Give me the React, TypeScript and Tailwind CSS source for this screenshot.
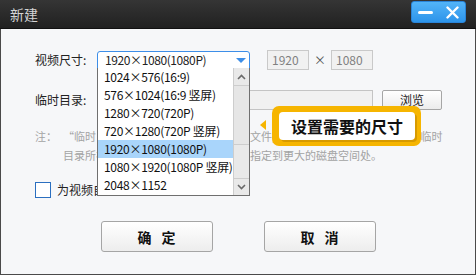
import React from "react";

const items = [
  "1024×576(16:9)",
  "576×1024(16:9 竖屏)",
  "1280×720(720P)",
  "720×1280(720P 竖屏)",
  "1920×1080(1080P)",
  "1080×1920(1080P 竖屏)",
  "2048×1152",
];

export default function App() {
  return (
    <div className="relative w-[476px] h-[275px] flex flex-col overflow-hidden bg-[#f6f7f9] font-['Noto_Sans_CJK_SC','Microsoft_YaHei',sans-serif]">
      {/* title bar */}
      <div className="h-[29px] flex items-start justify-between bg-linear-to-b from-[#353535] to-[#212121] border-b border-[#111]">
        <div className="self-center pl-[10px] text-[14px] text-[#d4d4d4] leading-none">新建</div>
        <div className="mt-[1px] mr-[10px] w-[55px] h-[22px] rounded-[3px] bg-linear-to-b from-[#52b4f8] to-[#2c94ea] border border-[#2a84d8] flex items-center">
          <div className="ml-[6px] w-[15px] h-[3px] rounded-full bg-white" />
          <svg className="ml-[13px]" width="13" height="13" viewBox="0 0 13 13">
            <path d="M1.5 1.5 L11.5 11.5 M11.5 1.5 L1.5 11.5" stroke="white" strokeWidth="2.4" strokeLinecap="round" />
          </svg>
        </div>
      </div>

      {/* body */}
      <div className="flex-1 flex flex-col border-x border-b border-[#4a4a4a] pt-[21px] text-[12px] text-[#222]">
        {/* row 1 */}
        <div className="flex items-center h-[20px] pl-[34px]">
          <div className="w-[62px] leading-none">视频尺寸:</div>
          <div className="relative w-[153px] h-[18px] border border-[#3d8ee8] rounded-t-[3px] bg-white flex items-center pl-[7px] text-[12px] leading-none tracking-[-0.4px]">
            <span>1920×1080(1080P)</span>
            <svg className="absolute right-[3px] top-[6px]" width="10" height="5" viewBox="0 0 10 5">
              <path d="M0 0 L10 0 L5 5 Z" fill="#3d8ee8" />
            </svg>
            {/* dropdown list */}
            <div className="absolute left-[-1px] top-[16px] w-[153px] h-[128px] z-10 bg-white border border-[#6f6f6f] border-t-0 flex tracking-[-0.3px]">
              <div className="w-[135px] flex flex-col">
                {items.map((t, i) => (
                  <div
                    key={t}
                    className={
                      i === 4
                        ? "h-[18px] shrink-0 flex items-center pl-[6px] bg-[#a9d5fb] text-[#111] whitespace-nowrap"
                        : "h-[18px] shrink-0 flex items-center pl-[6px] text-[#111] whitespace-nowrap"
                    }
                  >
                    {t}
                  </div>
                ))}
              </div>
              <div className="w-[16px] flex flex-col bg-[#e9e9e9] border-l border-[#cdcdcd]">
                <div className="h-[18px] flex items-center justify-center border-b border-[#cdcdcd]">
                  <svg width="9" height="6" viewBox="0 0 9 6">
                    <path d="M1 5 L4.5 1.5 L8 5" stroke="#6a6a6a" strokeWidth="1.6" fill="none" />
                  </svg>
                </div>
                <div className="h-[59px] border-b border-[#cdcdcd] bg-[#e6e6e6]" />
                <div className="flex-1" />
                <div className="h-[17px] flex items-center justify-center border-t border-[#cdcdcd]">
                  <svg width="9" height="6" viewBox="0 0 9 6">
                    <path d="M1 1 L4.5 4.5 L8 1" stroke="#6a6a6a" strokeWidth="1.6" fill="none" />
                  </svg>
                </div>
              </div>
            </div>
          </div>
          <div className="ml-[17px] w-[42px] h-[20px] border border-[#c9c9c9] bg-[#f1f1f1] text-[#808080] flex items-center pl-[4px] leading-none">1920</div>
          <div className="w-[22px] text-center text-[#555] leading-none">×</div>
          <div className="w-[42px] h-[20px] border border-[#c9c9c9] bg-[#f1f1f1] text-[#808080] flex items-center pl-[4px] leading-none">1080</div>
        </div>

        {/* row 2 */}
        <div className="flex items-center h-[20px] pl-[34px] mt-[20px]">
          <div className="w-[62px] leading-none">临时目录:</div>
          <div className="w-[276px] h-[20px] border border-[#c4c4c4] bg-[#f1f1f1]" />
          <div className="ml-[9px] w-[60px] h-[20px] border border-[#a6a6a6] rounded-[2px] bg-linear-to-b from-white to-[#ececec] flex items-center justify-center leading-none">浏览</div>
        </div>

        {/* note */}
        <div className="flex pl-[34px] mt-[17px] text-[11px] leading-[19px] text-[#a3a3a3]">
          <div className="w-[28px]">注：</div>
          <div className="flex flex-col whitespace-nowrap">
            <div>“临时目录”用于存放编辑时所产生的文件, 若默认位置空间不足请将存放临时</div>
            <div>目录所在的磁盘位置重新设置，或者将指定到更大的磁盘空间处。</div>
          </div>
        </div>

        {/* checkbox */}
        <div className="flex items-center h-[16px] pl-[34px] mt-[17px]">
          <div className="w-[16px] h-[16px] border-[1.5px] border-[#2b6fc0] bg-white" />
          <div className="ml-[6px] leading-none">为视频自动添加片头片尾</div>
        </div>

        {/* buttons */}
        <div className="flex justify-center gap-[51px] mt-[23px]">
          <div className="w-[112px] h-[31px] border border-[#a5a5a5] rounded-[3px] bg-linear-to-b from-white to-[#ededed] flex items-center justify-center gap-[10px] text-[14px] font-bold text-[#111] leading-none">
            <span>确</span>
            <span>定</span>
          </div>
          <div className="w-[112px] h-[31px] border border-[#a5a5a5] rounded-[3px] bg-linear-to-b from-white to-[#ededed] flex items-center justify-center gap-[10px] text-[14px] font-bold text-[#111] leading-none">
            <span>取</span>
            <span>消</span>
          </div>
        </div>
      </div>

      {/* tooltip */}
      <div className="absolute left-[272px] top-[106px] w-[149px] h-[40px] rounded-[7px] bg-[#f6b500] pl-[7px] pt-[6px] z-20">
        <div className="absolute left-[-12px] top-[14px] w-0 h-0 border-y-[5px] border-y-transparent border-r-[6px] border-r-[#f6b500]" />
        <div className="w-[136px] h-[28px] rounded-[4px] bg-white shadow-[2px_2px_0_#d79a00] flex items-center justify-center text-[16px] font-bold text-[#111] leading-none">
          设置需要的尺寸
        </div>
      </div>
    </div>
  );
}
